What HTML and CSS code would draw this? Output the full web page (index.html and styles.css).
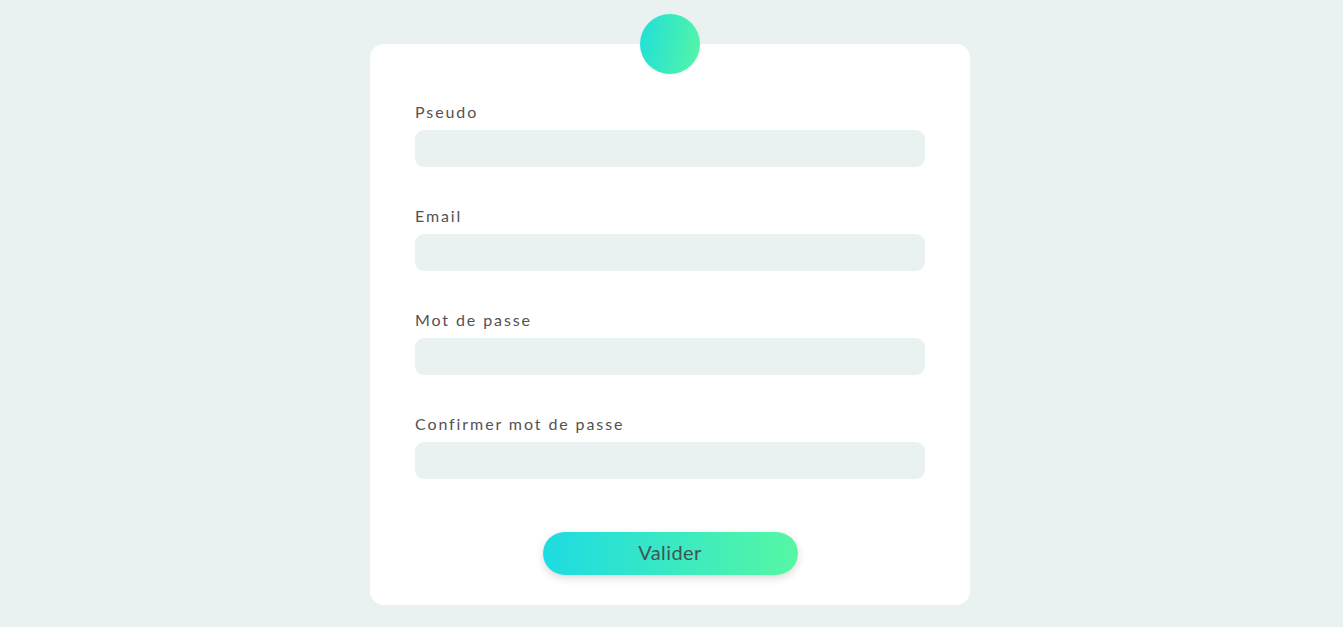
FILE: index.html
```html
<!DOCTYPE html>
<html lang="fr">
<head>
<meta charset="utf-8">
<title>Inscription</title>
<link rel="stylesheet" href="styles.css">
</head>
<body>
<main class="page">
  <form class="card">
    <div class="avatar"></div>
    <div class="field">
      <label class="label" for="pseudo">Pseudo</label>
      <input class="input" id="pseudo" type="text">
    </div>
    <div class="field">
      <label class="label" for="email">Email</label>
      <input class="input" id="email" type="email">
    </div>
    <div class="field">
      <label class="label" for="mdp">Mot de passe</label>
      <input class="input" id="mdp" type="password">
    </div>
    <div class="field">
      <label class="label" for="mdp2">Confirmer mot de passe</label>
      <input class="input" id="mdp2" type="password">
    </div>
    <div class="actions">
      <button class="btn" type="button">Valider</button>
    </div>
  </form>
</main>
</body>
</html>
```

FILE: styles.css
```css
* { box-sizing: border-box; }
html, body { margin: 0; padding: 0; }
body {
  background: #eaf2f1;
  font-family: Lato, "Open Sans", "Liberation Sans", sans-serif;
  min-height: 627px;
}
.page {
  display: flex;
  justify-content: center;
  padding-top: 44px;
  padding-right: 3px;
}
.card {
  position: relative;
  width: 600px;
  background: #ffffff;
  border-radius: 14px;
  padding: 59px 45px 30px;
  display: flex;
  flex-direction: column;
  gap: 40px;
}
.avatar {
  position: absolute;
  top: -30px;
  left: 270px;
  width: 60px;
  height: 60px;
  border-radius: 50%;
  background: linear-gradient(100deg, #1fdfd8 0%, #55f6a6 100%);
  box-shadow: 0 1px 3px rgba(0,0,0,0.06);
}
.field {
  display: flex;
  flex-direction: column;
  gap: 7px;
}
.label {
  font-size: 16px;
  line-height: 20px;
  letter-spacing: 1.9px;
  color: #565151;
  margin-top: -1px;
  margin-bottom: 1px;
}
.input {
  width: 510px;
  height: 37px;
  border: none;
  border-radius: 9px;
  background: #eaf2f1;
  outline: none;
  padding: 0 12px;
  font: inherit;
}
.actions {
  display: flex;
  justify-content: center;
  padding-top: 13px;
}
.btn {
  width: 255px;
  height: 43px;
  border: none;
  border-radius: 22px;
  background: linear-gradient(90deg, #1ddbe2 0%, #56f7a3 100%);
  box-shadow: 0 3px 8px rgba(0,0,0,0.15);
  font-family: inherit;
  font-size: 20px;
  letter-spacing: 0.4px;
  color: #3f5656;
  padding: 0 0 3px;
  cursor: pointer;
}
```
